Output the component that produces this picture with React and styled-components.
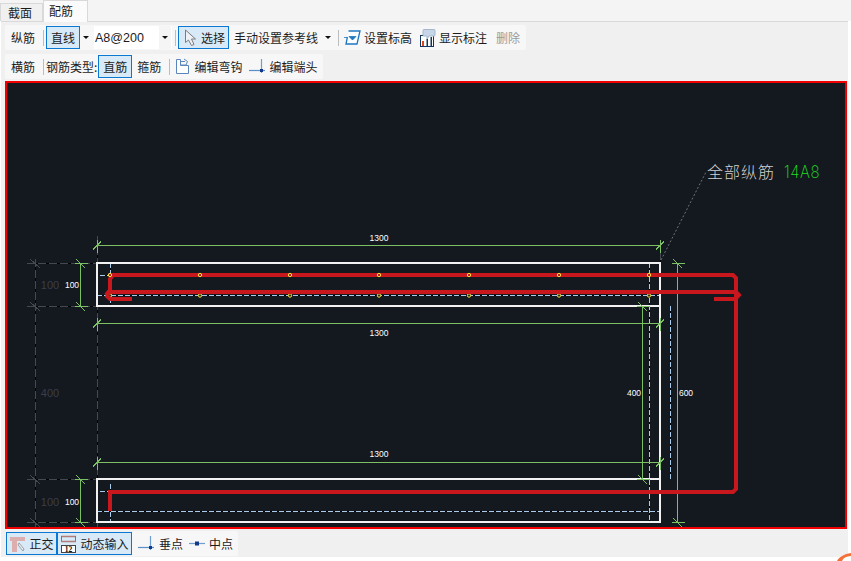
import React from "react";
import styled, { createGlobalStyle } from "styled-components";

const Global = createGlobalStyle`
  html, body { margin: 0; padding: 0; background: #fff; overflow: hidden; }
  * { box-sizing: border-box; }
`;
const FONT = `"Noto Sans CJK SC", "Liberation Sans", sans-serif`;

const Page = styled.div`
  position: relative;
  width: 851px;
  height: 561px;
  overflow: hidden;
  background: #fff;
  font-family: ${FONT};
  font-size: 12px;
  color: #1c1c1c;
`;
const TabBar = styled.div`
  display: flex;
  align-items: flex-end;
  height: 21px;
  background: #f4f4f4;
`;
const Tab = styled.div`
  display: flex;
  align-items: center;
  width: ${(p) => (p.$active ? "45px" : "43px")};
  height: ${(p) => (p.$active ? "22px" : "18px")};
  margin-bottom: ${(p) => (p.$active ? "-1px" : "0")};
  padding: 0 0 ${(p) => (p.$active ? "2px" : "0")} ${(p) => (p.$active ? "5px" : "7px")};
  background: ${(p) => (p.$active ? "#fbfbfb" : "#f0f0f0")};
  border: 1px solid #d9d9d9;
  border-bottom: none;
  position: relative;
  z-index: 1;
`;
const Panel = styled.div`
  display: flex;
  flex-direction: column;
  width: 847px;
  height: 536px;
  margin-left: 1px;
  padding: 3px 0 0 4px;
  background: #f0f0f0;
  border-top: 1px solid #d9d9d9;
`;
const Toolbar = styled.div`
  display: flex;
  align-items: center;
  align-self: flex-start;
  width: ${(p) => p.$w}px;
  height: 25px;
  margin-top: ${(p) => p.$mt || 0}px;
  background: #f7f7f7;
  border-radius: 2px;
`;
const Label = styled.span`
  display: inline-flex;
  align-items: center;
  white-space: nowrap;
  flex: none;
  line-height: 16px;
  margin-left: ${(p) => p.$ml || 0}px;
  color: ${(p) => (p.$muted ? "#9a9a9a" : "#1c1c1c")};
`;
const Sep = styled.span`
  flex: none;
  width: 1px;
  height: 16px;
  background: #bdbdbd;
  margin-left: ${(p) => p.$ml || 0}px;
`;
const Toggle = styled.div`
  display: flex;
  align-items: center;
  justify-content: ${(p) => (p.$start ? "flex-start" : "center")};
  gap: ${(p) => p.$gap || 0}px;
  flex: none;
  width: ${(p) => p.$w}px;
  height: ${(p) => p.$h || 23}px;
  margin-left: ${(p) => p.$ml || 0}px;
  padding-left: ${(p) => p.$pl || 0}px;
  background: #d8e9f7;
  border: 1px solid #0a78d2;
`;
const Caret = styled.span`
  flex: none;
  width: 0;
  height: 0;
  margin-left: ${(p) => p.$ml || 0}px;
  border-left: 3px solid transparent;
  border-right: 3px solid transparent;
  border-top: 3px solid #111;
`;
const Combo = styled.div`
  display: flex;
  align-items: center;
  flex: none;
  width: 78px;
  height: 23px;
  margin-left: ${(p) => p.$ml || 0}px;
  padding-left: 1px;
  background: #fff;
  font-family: "Liberation Sans", sans-serif;
  font-size: 12.5px;
`;
const ComboArrow = styled.div`
  display: flex;
  align-items: center;
  justify-content: center;
  width: 12px;
  height: 23px;
  margin-left: auto;
  margin-right: 1px;
  background: #f5f5f5;
`;
const Icon = styled.svg`
  flex: none;
  display: block;
  margin-left: ${(p) => p.$ml || 0}px;
`;
const Canvas = styled.div`
  width: 842px;
  height: 448px;
  margin-top: 2px;
  border: 2px solid #f00000;
  background: #14181f;
  flex: none;
`;
const Drawing = styled.svg`
  display: block;
  width: 838px;
  height: 444px;
`;
const BottomBar = styled.div`
  display: flex;
  align-items: center;
  height: 25px;
  margin-top: 2px;
`;
const SnapGroup = styled.div`
  display: flex;
  align-items: center;
  width: 106px;
  height: 25px;
  background: #f7f7f7;
  border-radius: 2px;
`;
const Swirl = styled.svg`
  position: absolute;
  right: 0;
  bottom: 0;
`;
const DimText = styled.text`
  font-family: "Liberation Sans", sans-serif;
  font-size: 8.5px;
  fill: #fff;
  text-anchor: middle;
`;
const GhostText = styled.text`
  font-family: "Liberation Sans", sans-serif;
  font-size: 11px;
  fill: #3b3f47;
  text-anchor: middle;
`;
const NoteText = styled.text`
  font-family: ${FONT};
  font-size: 16px;
  letter-spacing: 1px;
  font-weight: 300;
  fill: #d2d2d2;
`;
const NoteValue = styled.text`
  font-family: Inter, "Liberation Mono", monospace;
  font-size: 15px;
  font-weight: 200;
  letter-spacing: 0.6px;
  fill: #1fe01f;
`;
const IconDigits = styled.text`
  font-family: "Liberation Serif", serif;
  font-size: 7.5px;
  font-weight: 700;
  fill: #111;
  text-anchor: middle;
`;

const GREEN = "#7cc063";
const XS = [110, 200, 290, 379, 469, 559, 649];

const HTick = ({ x, y }) => (
  <g stroke={GREEN} strokeWidth="1">
    <line x1={x} y1={y - 6} x2={x} y2={y + 7} />
    <line x1={x - 4} y1={y + 4} x2={x + 4} y2={y - 4} />
  </g>
);
const VTick = ({ x, y }) => (
  <g stroke={GREEN} strokeWidth="1">
    <line x1={x - 6} y1={y} x2={x + 7} y2={y} />
    <line x1={x - 4} y1={y - 4} x2={x + 5} y2={y + 5} />
  </g>
);
const HDim = ({ y, ty }) => (
  <g>
    <line x1="97" y1={y} x2="660" y2={y} stroke={GREEN} />
    <HTick x={97} y={y} />
    <HTick x={660} y={y} />
    <DimText x="379" y={ty}>1300</DimText>
  </g>
);
const VDim = ({ x, y1, y2 }) => (
  <g>
    <line x1={x} y1={y1} x2={x} y2={y2} stroke={GREEN} />
    <VTick x={x} y={y1} />
    <VTick x={x} y={y2} />
  </g>
);
const Dashed = ({ x1, y1, x2, y2 }) => (
  <g>
    <line x1={x1} y1={y1} x2={x2} y2={y2} stroke="#000" />
    <line x1={x1} y1={y1} x2={x2} y2={y2} stroke="#a9cbec" strokeDasharray="5 2" />
  </g>
);
const Ghost = ({ x1, y1, x2, y2 }) => (
  <g>
    <line x1={x1} y1={y1} x2={x2} y2={y2} stroke="#000" />
    <line x1={x1} y1={y1} x2={x2} y2={y2} stroke="#44484f" strokeDasharray="8 3" />
  </g>
);

const CanvasArt = () => (
  <Drawing viewBox="7 83 838 444">
    <g shapeRendering="crispEdges">
      <Ghost x1="27" y1="263.5" x2="97" y2="263.5" />
      <Ghost x1="27" y1="306.5" x2="97" y2="306.5" />
      <Ghost x1="27" y1="479.5" x2="97" y2="479.5" />
      <Ghost x1="27" y1="522.5" x2="97" y2="522.5" />
      <Ghost x1="35.5" y1="259" x2="35.5" y2="527" />
      <Ghost x1="97.5" y1="236" x2="97.5" y2="527" />
      <Ghost x1="660.5" y1="252" x2="660.5" y2="263" />
      <line x1="30" y1="259" x2="40" y2="268" stroke="#44484f" />
      <line x1="30" y1="302" x2="40" y2="311" stroke="#44484f" />
      <line x1="30" y1="475" x2="40" y2="484" stroke="#44484f" />
      <line x1="30" y1="518" x2="40" y2="527" stroke="#44484f" />
      <Dashed x1="97" y1="295.5" x2="660" y2="295.5" />
      <Dashed x1="97" y1="511.5" x2="660" y2="511.5" />
      <Dashed x1="100" y1="275.5" x2="110" y2="275.5" />
      <Dashed x1="100" y1="491.5" x2="110" y2="491.5" />
      <Dashed x1="110.5" y1="263" x2="110.5" y2="306" />
      <Dashed x1="110.5" y1="484" x2="110.5" y2="522" />
      <Dashed x1="649.5" y1="263" x2="649.5" y2="522" />
      <Dashed x1="670.5" y1="306" x2="670.5" y2="479" />
      <g fill="none" stroke="#f2f2f2" strokeWidth="2">
        <rect x="97" y="263" width="563" height="43" />
        <rect x="97" y="479" width="563" height="43" />
        <line x1="660" y1="263" x2="660" y2="522" />
      </g>
      <HDim y={245.5} ty={241} />
      <HDim y={323.5} ty={336} />
      <HDim y={462.5} ty={457} />
      <VDim x={80.5} y1={263.5} y2={306.5} />
      <VDim x={80.5} y1={479.5} y2={522.5} />
      <VDim x={642.5} y1={306.5} y2={479.5} />
      <VDim x={677.5} y1={263.5} y2={522.5} />
    </g>
    <line x1="661" y1="260" x2="706" y2="172" stroke="#6f7278" strokeDasharray="2 2" />
    {XS.map((x) => (
      <circle key={x} cx={x} cy="295.5" r="1.7" fill="#2a2a20" stroke="#ffe53a" />
    ))}
    <g fill="none" stroke="#c9171e" strokeWidth="4">
      <path d="M733 275H113L110 279V290L106 295L110 292H736" />
      <path d="M132 299H110L106 295" />
      <path d="M714 299H737" />
      <path d="M729 275H733L736 278V489L733 492H110V511" />
      <path d="M736 292L739 295L736 298" />
    </g>
    {XS.map((x) => (
      <circle key={x} cx={x} cy="275" r="1.7" fill="#c9171e" stroke="#ffe53a" />
    ))}
    <DimText x="72" y="288">100</DimText>
    <DimText x="72" y="504.5">100</DimText>
    <DimText x="634" y="396">400</DimText>
    <DimText x="686" y="396">600</DimText>
    <GhostText x="50" y="289">100</GhostText>
    <GhostText x="50" y="397">400</GhostText>
    <GhostText x="50" y="506">100</GhostText>
    <NoteText x="707" y="178">全部纵筋</NoteText>
    <NoteValue transform="translate(784 178) scale(1 1.15)">14A8</NoteValue>
  </Drawing>
);

const PointerIcon = () => (
  <svg width="13" height="18" viewBox="0 0 13 18">
    <path d="M1.5 1L1.5 13.5L4.5 11L7.5 16.5L10 15.5L7.5 10H11.5Z" fill="#eef2f6" stroke="#7c7c7c" />
  </svg>
);
const ElevationIcon = ({ ml }) => (
  <Icon $ml={ml} width="17" height="15" viewBox="0 0 17 15">
    <path d="M4.5 1H16L13 14H2L3.4 7" fill="#fbfdff" stroke="#1f77c0" strokeWidth="1.3" />
    <path d="M0 7.5H3M5 6.5H12L8.5 10Z" fill="#1f77c0" stroke="#1f77c0" strokeWidth="0.8" />
  </Icon>
);
const ShowMarkIcon = ({ ml }) => (
  <Icon $ml={ml} width="16" height="18" viewBox="0 0 16 18">
    <rect x="0.5" y="6.5" width="13" height="11" fill="#fff" stroke="#12365f" />
    <rect x="2" y="12" width="2" height="5" fill="#d8481c" />
    <rect x="6.5" y="10" width="1.5" height="7" fill="#12365f" />
    <rect x="10.5" y="8" width="1.5" height="9" fill="#12365f" />
    <path d="M3 1.5Q3 .5 4 .5H14Q15 .5 15 1.5V6Q15 7 14 7H9L7 10V7H4Q3 7 3 6Z" fill="#c6d6e8" stroke="#a4b8cc" />
  </Icon>
);
const HookIcon = ({ ml }) => (
  <Icon $ml={ml} width="15" height="17" viewBox="0 0 15 17">
    <path d="M1.5 1.5H5.5V7.5H13.5V15.5H1.5Z" fill="#fff" stroke="#5a86bd" />
    <path d="M5.5 3.5H10M9 1L12.5 3.5L11 7H5.5" fill="none" stroke="#5a86bd" />
  </Icon>
);
const PerpIcon = ({ ml }) => (
  <Icon $ml={ml} width="16" height="15" viewBox="0 0 16 15">
    <line x1="12.5" y1="0" x2="12.5" y2="14" stroke="#6f9fd0" strokeWidth="1.2" />
    <line x1="0" y1="11.5" x2="16" y2="11.5" stroke="#5b8fc8" strokeWidth="1.2" />
    <rect x="11" y="10" width="3" height="3" fill="#123a8c" />
  </Icon>
);
const MidIcon = ({ ml }) => (
  <Icon $ml={ml} width="16" height="7" viewBox="0 0 16 7">
    <line x1="0" y1="3.5" x2="16" y2="3.5" stroke="#6f9fd0" strokeWidth="1.2" />
    <rect x="6" y="1.5" width="4" height="4" fill="#123a8c" />
  </Icon>
);
const OrthoIcon = () => (
  <svg width="17" height="17" viewBox="0 0 17 17">
    <path d="M1 2H16V6H8V17H3V6H1Z" fill="#dcaeae" />
    <path d="M10 8L15 14L14 16L9 10Z" fill="#e8eef3" stroke="#808080" strokeWidth="0.7" />
  </svg>
);
const DynInputIcon = () => (
  <svg width="17" height="18" viewBox="0 0 17 18">
    <path d="M1 1.5H16" stroke="#b07c7c" strokeWidth="1.5" />
    <path d="M1.5 1V7M15.5 1V7" stroke="#777" />
    <path d="M1 6.5H16" stroke="#b07c7c" strokeWidth="1.5" />
    <rect x="1.5" y="10.5" width="14" height="7" fill="#fff" stroke="#444" />
    <IconDigits x="8.5" y="16.5">12</IconDigits>
  </svg>
);

export default function App() {
  return (
    <Page>
      <Global />
      <TabBar>
        <Tab>截面</Tab>
        <Tab $active>配筋</Tab>
      </TabBar>
      <Panel>
        <Toolbar $w={521}>
          <Label $ml={6}>纵筋</Label>
          <Sep $ml={8} />
          <Toggle $w={34} $ml={2}>直线</Toggle>
          <Caret $ml={3} />
          <Combo $ml={5}>
            A8@200
            <ComboArrow><Caret /></ComboArrow>
          </Combo>
          <Sep $ml={3} />
          <Toggle $w={51} $ml={2} $gap={4} $start $pl={5}><PointerIcon />选择</Toggle>
          <Label $ml={5}>手动设置参考线</Label>
          <Caret $ml={7} />
          <Sep $ml={7} />
          <ElevationIcon ml={5} />
          <Label $ml={3}>设置标高</Label>
          <ShowMarkIcon ml={8} />
          <Label $ml={3}>显示标注</Label>
          <Label $ml={9} $muted>删除</Label>
        </Toolbar>
        <Toolbar $w={318} $mt={4}>
          <Label $ml={6}>横筋</Label>
          <Sep $ml={8} />
          <Label $ml={2}>钢筋类型:</Label>
          <Toggle $w={34} $ml={1}>直筋</Toggle>
          <Label $ml={5}>箍筋</Label>
          <Sep $ml={8} />
          <HookIcon ml={5} />
          <Label $ml={4}>编辑弯钩</Label>
          <PerpIcon ml={7} />
          <Label $ml={4}>编辑端头</Label>
        </Toolbar>
        <Canvas><CanvasArt /></Canvas>
        <BottomBar>
          <Toggle $w={51} $ml={1} $gap={3}><OrthoIcon />正交</Toggle>
          <Toggle $w={75} $gap={3}><DynInputIcon />动态输入</Toggle>
          <SnapGroup>
            <PerpIcon ml={6} />
            <Label $ml={5}>垂点</Label>
            <MidIcon ml={6} />
            <Label $ml={4}>中点</Label>
          </SnapGroup>
        </BottomBar>
      </Panel>
      <Swirl width="14" height="8" viewBox="0 0 14 8">
        <path d="M0 8C2 4 7 1 14 0V3C9 3.5 6 5 5 8Z" fill="#f4713a" />
      </Swirl>
    </Page>
  );
}
